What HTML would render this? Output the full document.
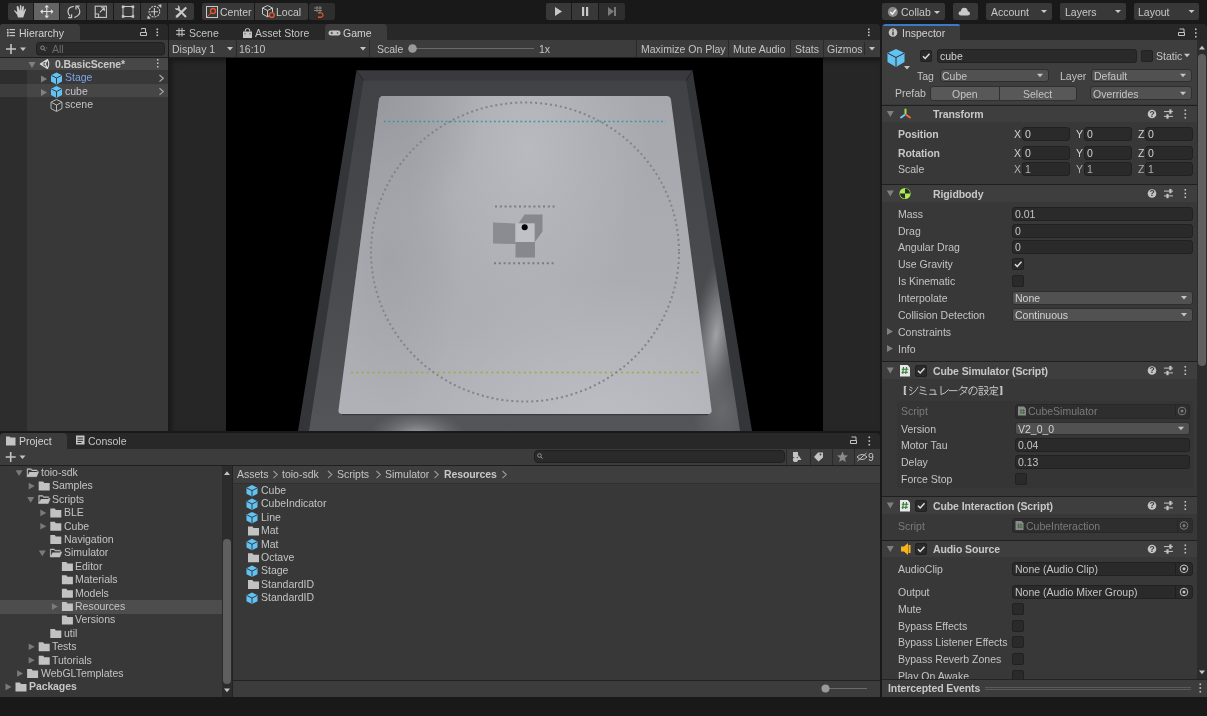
<!DOCTYPE html>
<html><head><meta charset="utf-8">
<style>
*{margin:0;padding:0;box-sizing:border-box}
html,body{width:1207px;height:716px;overflow:hidden;background:#191919}
body{-webkit-font-smoothing:antialiased;position:relative;font-family:"Liberation Sans",sans-serif;font-size:10.5px;color:#c4c4c4}
.a{position:absolute}
.t{position:absolute;white-space:nowrap;line-height:12px;will-change:transform}
.tb{background:#3c3c3c}
.fld{position:absolute;background:#2a2a2a;border:1px solid #212121;border-radius:2px}
.pop{position:absolute;background:#515151;border:1px solid #303030;border-radius:2px}
.btn{position:absolute;background:#585858;border:1px solid #303030;border-radius:2px}
.chk{position:absolute;width:12px;height:12px;background:#2a2a2a;border:1px solid #212121;border-radius:2px}
.arr{position:absolute;width:0;height:0;border-left:4px solid transparent;border-right:4px solid transparent;border-top:5px solid #c4c4c4}
</style></head>
<body>
<!-- ===== top toolbar ===== -->
<div id="toolbar" class="a" style="left:0;top:0;width:1207px;height:24px;background:#191919">
  <div class="a" style="left:8px;top:3px;width:25px;height:17px;background:#383838;border-radius:2px 0 0 2px"></div>
  <div class="a" style="left:34px;top:3px;width:25px;height:17px;background:#646464"></div>
  <div class="a" style="left:60px;top:3px;width:26px;height:17px;background:#383838"></div>
  <div class="a" style="left:87px;top:3px;width:26px;height:17px;background:#383838"></div>
  <div class="a" style="left:114px;top:3px;width:26px;height:17px;background:#383838"></div>
  <div class="a" style="left:141px;top:3px;width:26px;height:17px;background:#383838"></div>
  <div class="a" style="left:168px;top:3px;width:26px;height:17px;background:#383838;border-radius:0 2px 2px 0"></div>
  <svg class="a" style="left:0;top:0" width="200" height="24" fill="none" stroke="#c8c8c8" stroke-width="1.1">
    <!-- hand -->
    <path d="M18 17.6 L17 14.5 L14.2 11 Q13.8 10 14.8 10.2 L17.2 12.3 L16.6 6.6 Q17.6 5.4 18.5 6.6 L19.6 11 L20 5.4 Q20.6 4.6 21.3 5.4 L21.6 11 L22.3 6.4 Q23.3 5.6 24 6.6 L23.6 11.6 L25 9 Q25.8 8.4 26 9.4 L24.2 14.6 L23.2 17.6 Z" fill="#c8c8c8" stroke="none"/>
    <!-- move -->
    <path d="M41 11.5 H52.5 M46.8 5.8 V17.3" stroke="#e0e0e0"/>
    <path d="M42.6 9.8 L41 11.5 L42.6 13.3 M51 9.8 L52.6 11.5 L51 13.3 M45.2 7.4 L46.8 5.8 L48.4 7.4 M45.2 15.6 L46.8 17.3 L48.4 15.6" stroke="#e0e0e0" stroke-width="1.2"/>
    <!-- rotate -->
    <path d="M73.8 6.3 Q68 7 68 11.5 Q68 14 70.2 16.3" stroke-width="1.2"/>
    <path d="M68.2 17.6 H71.6 V14.2" stroke-width="1.2"/>
    <path d="M74.3 17.5 Q79.8 15.5 79.8 11.5 Q79.8 8.5 77.2 6.8" stroke-width="1.2"/>
    <path d="M79.6 6.2 H76 V9.6" stroke-width="1.2"/>
    <!-- scale -->
    <rect x="95.2" y="6.2" width="11.2" height="11.2" stroke-width="1.1"/><path d="M95.2 14 H98.6 V17.4 M99.8 12.4 L104 8.2 M101 7.8 H104.3 V11.1" stroke-width="1.1"/>
    <!-- rect -->
    <path d="M123 7 V16.5 M133 7 V16.5 M123.5 6.5 H132.5 M123.5 16.5 H132.5" stroke-width="1"/>
    <rect x="121.8" y="5.5" width="2.6" height="2.6" fill="#c8c8c8" stroke="none"/><rect x="131.6" y="5.5" width="2.6" height="2.6" fill="#c8c8c8" stroke="none"/>
    <rect x="121.8" y="15.2" width="2.6" height="2.6" fill="#c8c8c8" stroke="none"/><rect x="131.6" y="15.2" width="2.6" height="2.6" fill="#c8c8c8" stroke="none"/>
    <!-- transform -->
    <circle cx="154.4" cy="11.7" r="5.3" stroke-dasharray="2 1"/><path d="M154.4 8 V15.4 M150.7 11.7 H158.1" />
    <path d="M158.5 5.2 L161.2 4.8 L160.8 7.5 Z M150.3 18.2 L147.6 18.6 L148 15.9 Z" fill="#c8c8c8" stroke="#c8c8c8" stroke-width="0.6"/>
    <!-- custom -->
    <path d="M178.6 9.4 L186 17" stroke-width="2"/>
    <path d="M175 7.8 Q175.3 10.6 178 10.3 Q180.2 10 179.8 7.6 Q179.5 5.6 177.6 5.3 L178.4 7.6 L177 8.6 Z" fill="#c8c8c8" stroke="none"/>
    <path d="M185.5 6.8 L187 8.3 L177.8 17.4 L175.6 17.8 L176 15.6 Z" fill="#c8c8c8" stroke="none"/>
  </svg>
  <div class="a" style="left:202px;top:3px;width:52px;height:17px;background:#383838;border-radius:2px 0 0 2px"></div>
  <div class="a" style="left:255px;top:3px;width:53px;height:17px;background:#383838;border-radius:0 2px 2px 0"></div>
  <div class="a" style="left:309px;top:3px;width:26px;height:17px;background:#2e2e2e;border-radius:2px"></div>
  <svg class="a" style="left:200px;top:0" width="140" height="24" fill="none" stroke="#c8c8c8" stroke-width="1">
    <rect x="6.5" y="6.5" width="11" height="11"/>
    <circle cx="13" cy="11" r="2.5" stroke="#e2572c" stroke-width="1.3"/><path d="M7 17 L11 13" stroke="#e2572c"/>
    <path d="M62.5 8 L67.5 5.5 L72.5 8 V14 L67.5 16.8 L62.5 14 Z M62.5 8 L67.5 10.5 L72.5 8 M67.5 10.5 V16.8"/>
    <circle cx="71.8" cy="15" r="2.4" fill="#383838" stroke="#e2572c" stroke-width="1.4"/>
    <path d="M117 6 V12 M120 6 V12 M114 8 H122 M114 10.5 H122" stroke="#8a8a8a" stroke-width="0.9"/>
    <path d="M118 13 Q123 12 123 15 Q123 18 118 17" stroke="#e2572c" stroke-width="1.3"/>
  </svg>
  <div class="t" style="left:220px;top:6px;color:#c8c8c8">Center</div>
  <div class="t" style="left:276px;top:6px;color:#c8c8c8">Local</div>

  <div class="a" style="left:546px;top:3px;width:25px;height:17px;background:#383838;border-radius:2px 0 0 2px"></div>
  <div class="a" style="left:572px;top:3px;width:26px;height:17px;background:#383838"></div>
  <div class="a" style="left:599px;top:3px;width:26px;height:17px;background:#2e2e2e;border-radius:0 2px 2px 0"></div>
  <svg class="a" style="left:540px;top:0" width="90" height="24">
    <path d="M15 7 L22 11.5 L15 16 Z" fill="#c8c8c8"/>
    <rect x="42" y="7" width="2.2" height="9" fill="#c8c8c8"/><rect x="46" y="7" width="2.2" height="9" fill="#c8c8c8"/>
    <path d="M68 7 L74 11.5 L68 16 Z" fill="#7a7a7a"/><rect x="74" y="7" width="2" height="9" fill="#7a7a7a"/>
  </svg>

  <div class="a" style="left:882px;top:3px;width:63px;height:17px;background:#383838;border-radius:2px"></div>
  <div class="a" style="left:953px;top:3px;width:25px;height:17px;background:#383838;border-radius:2px"></div>
  <div class="a" style="left:986px;top:3px;width:66px;height:17px;background:#383838;border-radius:2px"></div>
  <div class="a" style="left:1060px;top:3px;width:66px;height:17px;background:#383838;border-radius:2px"></div>
  <div class="a" style="left:1134px;top:3px;width:65px;height:17px;background:#383838;border-radius:2px"></div>
  <svg class="a" style="left:880px;top:0" width="327" height="24">
    <circle cx="12.8" cy="12" r="5" fill="#8c8c8c"/><path d="M10.2 12 L12.3 14.2 L15.8 9.8" stroke="#f0f0f0" stroke-width="1.5" fill="none"/>
    <path d="M54 13 L60 13 L57 16 Z" fill="#c8c8c8" transform="translate(0,-2)"/>
    <path d="M81 15.5 Q78.5 15.5 78.5 13.3 Q78.5 11.3 80.8 11.2 Q81.3 7.8 84.3 7.8 Q87.3 7.8 87.8 11.2 Q90 11.4 90 13.4 Q90 15.5 87.5 15.5 Z" fill="#c8c8c8"/>
    <path d="M161 10 L167 10 L164 13 Z" fill="#c8c8c8"/>
    <path d="M235 10 L241 10 L238 13 Z" fill="#c8c8c8"/>
    <path d="M308.5 10 L314.5 10 L311.5 13 Z" fill="#c8c8c8"/>
  </svg>
  <div class="t" style="left:901px;top:6px;color:#c8c8c8">Collab</div>
  <div class="t" style="left:991px;top:6px;color:#c8c8c8">Account</div>
  <div class="t" style="left:1065px;top:6px;color:#c8c8c8">Layers</div>
  <div class="t" style="left:1138px;top:6px;color:#c8c8c8">Layout</div>
</div>

<!-- ===== Hierarchy ===== -->
<div id="hier" class="a" style="left:0;top:24px;width:168px;height:407px;background:#282828;border-radius:2px 4px 0 0;overflow:hidden">
  <div class="a" style="left:0;top:0;width:80px;height:16px;background:#3c3c3c;border-radius:2px 4px 0 0"></div>
  <div class="a tb" style="left:0;top:16px;width:168px;height:18px;border-bottom:1px solid #1f1f1f"></div>
  <div class="a" style="left:0;top:34px;width:168px;height:373px;background:#383838"></div>
  <div class="a" style="left:0;top:46px;width:27px;height:361px;background:#2d2d2d"></div>
  <div class="a" style="left:0;top:34px;width:168px;height:12px;background:#474747"></div>
  <div class="a" style="left:0;top:60px;width:27px;height:13px;background:#3d3d3d"></div>
  <div class="a" style="left:27px;top:60px;width:141px;height:13px;background:#464646"></div>
  <svg class="a" style="left:0;top:0" width="168" height="100">
    <g fill="#c4c4c4"><rect x="7" y="5" width="1.5" height="1.5"/><rect x="7.5" y="6.5" width="0.8" height="5.5"/><rect x="7" y="8" width="1.5" height="1.5"/><rect x="7" y="11" width="1.5" height="1.5"/>
    <rect x="9.5" y="5" width="5.5" height="1.2"/><rect x="9.5" y="8" width="5.5" height="1.2"/><rect x="9.5" y="11" width="5.5" height="1.2"/></g>
    <path d="M141.5 5.5 V4.5 H145.5 V8 M140.5 8.5 H146.5 V11.5 H140.5 Z" fill="none" stroke="#c4c4c4" stroke-width="1"/>
    <g fill="#c4c4c4"><rect x="156.5" y="4.5" width="1.6" height="1.6"/><rect x="156.5" y="7.5" width="1.6" height="1.6"/><rect x="156.5" y="10.5" width="1.6" height="1.6"/></g>
    <path d="M11 20 V30 M6 25 H16" stroke="#c4c4c4" stroke-width="1.6"/>
    <path d="M20 23.5 H26 L23 27 Z" fill="#c4c4c4"/>
    <rect x="36.5" y="18.5" width="128" height="12.5" rx="3" fill="#2a2a2a" stroke="#202020"/>
    <circle cx="42.5" cy="23.8" r="1.8" fill="none" stroke="#9a9a9a" stroke-width="0.9"/><path d="M43.8 25.2 L45.5 27" stroke="#9a9a9a" stroke-width="1"/><rect x="46.2" y="23.5" width="0.9" height="0.9" fill="#9a9a9a"/>
    <path d="M28.5 38 H35.5 L32 44 Z" fill="#808080"/>
    <path d="M41 51.5 L47 55 L41 58.5 Z" fill="#808080"/>
    <path d="M41 65 L47 68.5 L41 72 Z" fill="#808080"/>
    <g fill="none" stroke="#dcdcdc" stroke-width="1.1" stroke-linejoin="round">
      <path d="M40.3 40 L47.5 35.5 Q50 40 47.5 44.5 Z M40.5 40 H45.3 L47.4 35.8 M45.3 40 L47.4 44.2"/>
    </g>
    <g stroke="#a8a8a8" stroke-width="1.2" fill="none"><path d="M159.5 51 L163.3 54.3 L159.5 57.6 M159.5 64.3 L163.3 67.6 L159.5 70.9"/></g>
    <path d="M157 35 h1.5 v1.5 h-1.5z M157 38.5 h1.5 v1.5 h-1.5z M157 42 h1.5 v1.5 h-1.5z" fill="#c4c4c4"/>
  </svg>
  <div class="t" style="left:19px;top:3px;color:#d2d2d2">Hierarchy</div>
  <div class="t" style="left:52px;top:19px;color:#6c6c6c">All</div>
  <div class="t" style="left:55px;top:33.5px;color:#d2d2d2;font-weight:bold;letter-spacing:-0.15px;opacity:0.93">0.BasicScene*</div>
  <div class="t" style="left:65px;top:47px;color:#7ca5ea">Stage</div>
  <div class="t" style="left:65px;top:60.5px;color:#c4c4c4">cube</div>
  <div class="t" style="left:65px;top:74px;color:#c4c4c4">scene</div>
  <svg class="a" style="left:0;top:0" width="168" height="100">
    <g id="cubeic">
      <path d="M56.5 48.5 L62 51.2 V57.5 L56.5 60.5 L51 57.5 V51.2 Z" fill="#62c3f2"/>
      <path d="M51.5 51.5 L56.5 54 L61.5 51.5 M56.5 54 V60" stroke="#2d2d2d" stroke-width="0.9" fill="none"/>
    </g>
    <use href="#cubeic" y="13.5"/>
    <path d="M56.5 75.5 L62 78.2 V84.5 L56.5 87.5 L51 84.5 V78.2 Z M51.5 78.5 L56.5 81 L61.5 78.5 M56.5 81 V87" stroke="#c4c4c4" stroke-width="0.9" fill="none"/>
  </svg>
</div>

<!-- ===== Game ===== -->
<div id="game" class="a" style="left:169px;top:24px;width:711px;height:407px;background:#282828;border-radius:0 4px 0 0">
  <div class="a" style="left:156px;top:0;width:62px;height:16px;background:#3c3c3c;border-radius:4px 4px 0 0"></div>
  <div class="a tb" style="left:0;top:16px;width:711px;height:18px;border-bottom:1px solid #1f1f1f"></div>
  <div class="a" style="left:67px;top:16px;width:1px;height:17px;background:#2a2a2a"></div>
  <div class="a" style="left:200px;top:16px;width:1px;height:17px;background:#2a2a2a"></div>
  <div class="a" style="left:467px;top:16px;width:1px;height:17px;background:#2a2a2a"></div>
  <div class="a" style="left:559px;top:16px;width:1px;height:17px;background:#2a2a2a"></div>
  <div class="a" style="left:621px;top:16px;width:1px;height:17px;background:#2a2a2a"></div>
  <div class="a" style="left:654px;top:16px;width:1px;height:17px;background:#2a2a2a"></div>
  <div class="a" style="left:695px;top:18px;width:1px;height:13px;background:#2a2a2a"></div>
  <svg class="a" style="left:0;top:0" width="711" height="33">
    <path d="M10 4 V12.5 M13 4 V12.5 M7 6.6 H16 M7 10.3 H16" stroke="#c4c4c4" stroke-width="1" fill="none"/>
    <path d="M74 7.5 H83 V14 H74 Z" fill="#c4c4c4"/><path d="M76.3 7.5 V6 Q76.3 4.6 78.5 4.6 Q80.7 4.6 80.7 6 V7.5" stroke="#c4c4c4" stroke-width="1" fill="none"/><path d="M76 9 v1.5 M81 9 v1.5" stroke="#3c3c3c" stroke-width="0.8"/>
    <path d="M162 6.5 H169 Q171.5 6.5 171.5 9 Q171.5 11.5 169 11.5 H162 Q159.5 11.5 159.5 9 Q159.5 6.5 162 6.5 Z" fill="#c4c4c4"/>
    <path d="M161.5 9 H164 M162.8 7.8 V10.2" stroke="#3c3c3c" stroke-width="0.8"/><circle cx="168.5" cy="9" r="0.8" fill="#3c3c3c"/>
    <g fill="#c4c4c4"><rect x="699" y="4.5" width="1.6" height="1.6"/><rect x="699" y="7.5" width="1.6" height="1.6"/><rect x="699" y="10.5" width="1.6" height="1.6"/></g>
    <path d="M58 23 H64 L61 26.5 Z" fill="#c4c4c4"/>
    <path d="M191 23 H197 L194 26.5 Z" fill="#c4c4c4"/>
    <path d="M700 23 H706 L703 26.5 Z" fill="#c4c4c4"/>
    <line x1="243" y1="24.5" x2="365" y2="24.5" stroke="#6a6a6a" stroke-width="1"/>
    <circle cx="243.5" cy="24.5" r="4.3" fill="#9a9a9a"/>
  </svg>
  <div class="t" style="left:20px;top:3px;color:#c4c4c4">Scene</div>
  <div class="t" style="left:86px;top:3px;color:#c4c4c4">Asset Store</div>
  <div class="t" style="left:174px;top:3px;color:#d2d2d2">Game</div>
  <div class="t" style="left:3px;top:19px;color:#c4c4c4">Display 1</div>
  <div class="t" style="left:70px;top:19px;color:#c4c4c4">16:10</div>
  <div class="t" style="left:208px;top:19px;color:#c4c4c4">Scale</div>
  <div class="t" style="left:370px;top:19px;color:#c4c4c4">1x</div>
  <div class="t" style="left:472px;top:19px;color:#c4c4c4">Maximize On Play</div>
  <div class="t" style="left:564px;top:19px;color:#c4c4c4">Mute Audio</div>
  <div class="t" style="left:626px;top:19px;color:#c4c4c4">Stats</div>
  <div class="t" style="left:658px;top:19px;color:#c4c4c4">Gizmos</div>
  <div class="a" style="left:0;top:34px;width:711px;height:373px;background:#262626;box-shadow:inset 3px 3px 4px rgba(0,0,0,0.35)"></div>
  <div class="a" style="left:57px;top:34px;width:597px;height:373px;background:#000"></div>
  <svg class="a" style="left:57px;top:33px" width="597" height="374" viewBox="226 57 597 374">
    <defs>
      <linearGradient id="matbase" x1="0" y1="96" x2="0" y2="414" gradientUnits="userSpaceOnUse">
        <stop offset="0" stop-color="#a6a8ae"/><stop offset="0.5" stop-color="#aaacb1"/><stop offset="1" stop-color="#afb1b6"/>
      </linearGradient>
      <radialGradient id="mh1" cx="0" cy="0" r="1" gradientUnits="userSpaceOnUse" gradientTransform="translate(528 150) scale(120 190)">
        <stop offset="0" stop-color="#b8babf" stop-opacity="1"/><stop offset="1" stop-color="#b8babf" stop-opacity="0"/>
      </radialGradient>
      <radialGradient id="mh2" cx="0" cy="0" r="1" gradientUnits="userSpaceOnUse" gradientTransform="translate(600 430) scale(190 150)">
        <stop offset="0" stop-color="#bcbec3" stop-opacity="1"/><stop offset="1" stop-color="#bcbec3" stop-opacity="0"/>
      </radialGradient>
      <radialGradient id="mh3" cx="0" cy="0" r="1" gradientUnits="userSpaceOnUse" gradientTransform="translate(375 100) scale(110 130)">
        <stop offset="0" stop-color="#94969c" stop-opacity="0.85"/><stop offset="1" stop-color="#94969c" stop-opacity="0"/>
      </radialGradient>
      <radialGradient id="hlR" cx="0" cy="0" r="1" gradientUnits="userSpaceOnUse" gradientTransform="translate(716 335) rotate(8.5) scale(24 85)">
        <stop offset="0" stop-color="#a0a2a6"/><stop offset="0.45" stop-color="#85878b" stop-opacity="0.7"/><stop offset="1" stop-color="#707276" stop-opacity="0"/>
      </radialGradient>
      <radialGradient id="hlB" cx="0" cy="0" r="1" gradientUnits="userSpaceOnUse" gradientTransform="translate(417 436) scale(48 26)">
        <stop offset="0" stop-color="#a4a6aa"/><stop offset="0.45" stop-color="#808286" stop-opacity="0.7"/><stop offset="1" stop-color="#707276" stop-opacity="0"/>
      </radialGradient>
      <radialGradient id="hlBR" cx="0" cy="0" r="1" gradientUnits="userSpaceOnUse" gradientTransform="translate(722 410) scale(30 50)">
        <stop offset="0" stop-color="#67696d"/><stop offset="1" stop-color="#67696d" stop-opacity="0"/>
      </radialGradient>
      <radialGradient id="mdL" cx="0" cy="0" r="1" gradientUnits="userSpaceOnUse" gradientTransform="translate(390 260) scale(70 150)">
        <stop offset="0" stop-color="#9fa1a7" stop-opacity="0.8"/><stop offset="1" stop-color="#9fa1a7" stop-opacity="0"/>
      </radialGradient>
      <linearGradient id="bandg" x1="0" y1="80" x2="0" y2="431" gradientUnits="userSpaceOnUse">
        <stop offset="0" stop-color="#414246"/><stop offset="0.6" stop-color="#4a4b4f"/><stop offset="1" stop-color="#545559"/>
      </linearGradient>
    </defs>
    <polygon points="356.5,70.5 692.5,70.5 752,431 298,431" fill="#333538"/>
    <polygon points="356.5,70.5 692.5,70.5 686,80.5 363.5,80.5" fill="#3a3a3e"/>
    <polygon points="363.5,80.5 686,80.5 740,431 309,431" fill="url(#bandg)"/>
    <polygon points="363.5,80.5 686,80.5 740,431 309,431" fill="url(#hlR)"/>
    <polygon points="363.5,80.5 686,80.5 740,431 309,431" fill="url(#hlB)"/>
    <polygon points="363.5,80.5 686,80.5 740,431 309,431" fill="url(#hlBR)"/>
    <path d="M356.5 70.5 L363.5 80.5 M692.5 70.5 L686 80.5" stroke="#1e1f21" stroke-width="0.8"/>
    <path d="M342 414.5 H708" stroke="#3a3b3f" stroke-width="1.5"/>
    <path id="matp" d="M383.5 96 H666.5 Q670.5 96 671 100 L711.5 410 Q712 414 708 414 H342 Q338 414 338.5 410 L379 100 Q379.5 96 383.5 96 Z" fill="url(#matbase)"/>
    <path d="M383.5 96 H666.5 Q670.5 96 671 100 L711.5 410 Q712 414 708 414 H342 Q338 414 338.5 410 L379 100 Q379.5 96 383.5 96 Z" fill="url(#mh1)"/>
    <path d="M383.5 96 H666.5 Q670.5 96 671 100 L711.5 410 Q712 414 708 414 H342 Q338 414 338.5 410 L379 100 Q379.5 96 383.5 96 Z" fill="url(#mh2)"/>
    <path d="M383.5 96 H666.5 Q670.5 96 671 100 L711.5 410 Q712 414 708 414 H342 Q338 414 338.5 410 L379 100 Q379.5 96 383.5 96 Z" fill="url(#mh3)"/>
    <path d="M383.5 96 H666.5 Q670.5 96 671 100 L711.5 410 Q712 414 708 414 H342 Q338 414 338.5 410 L379 100 Q379.5 96 383.5 96 Z" fill="url(#mdL)"/>
    <line x1="384" y1="121.5" x2="666" y2="121.5" stroke="#3596ac" stroke-width="1.7" stroke-dasharray="1.8 2.6"/>
    <line x1="351" y1="372.5" x2="700" y2="372.5" stroke="#97b030" stroke-width="1.7" stroke-dasharray="2 3.4"/>
    <ellipse cx="525" cy="252" rx="154" ry="149.5" fill="none" stroke="#818388" stroke-width="2" stroke-dasharray="2 3"/>
    <line x1="495" y1="206.5" x2="555" y2="206.5" stroke="#7a7c81" stroke-width="2" stroke-dasharray="2 2.8"/>
    <line x1="494" y1="263.2" x2="556" y2="263.2" stroke="#7a7c81" stroke-width="2" stroke-dasharray="2 2.8"/>
    <polygon points="493,222.5 515.5,223.5 515.5,244 493,243.5" fill="#8a8c92"/>
    <polygon points="515.5,242 535,242 535,257.5 515.5,257.5" fill="#86888e"/>
    <polygon points="518.5,223.5 524.5,214.5 542.5,214.5 542.5,231.5 534.5,242.5 534.5,223.5" fill="#86888e"/>
    <rect x="515.5" y="223.5" width="19" height="18.5" fill="#bfc1c7"/>
    <circle cx="524.7" cy="227.3" r="3" fill="#000"/>
  </svg>
</div>

<!-- ===== Inspector ===== -->
<div id="insp" class="a" style="left:882px;top:24px;width:325px;height:673px;background:#282828;border-radius:4px 4px 0 0;overflow:hidden">
<div class="a" style="left:0.0px;top:0.0px;width:78.0px;height:16.0px;background:#3c3c3c;border-radius:4px 4px 0 0"></div>
<div class="a" style="left:0.0px;top:0.0px;width:78.0px;height:2.0px;background:#3a7ac6;border-radius:3px 3px 0 0"></div>
<div class="t" style="left:20.0px;top:2.5px;color:#d2d2d2;">Inspector</div>
<div class="a" style="left:0.0px;top:16.0px;width:315.0px;height:657.0px;background:#383838"></div>
<div class="a" style="left:315.0px;top:16.0px;width:10.0px;height:640.0px;background:#2c2c2c"></div>
<div class="a" style="left:316.0px;top:30.0px;width:8.0px;height:312.0px;background:#5f5f5f;border-radius:4px"></div>
<div class="a" style="left:0.0px;top:16.0px;width:315.0px;height:64.0px;background:#3e3e3e"></div>
<div class="a" style="left:38.0px;top:26.0px;width:12.0px;height:12.0px;background:#2a2a2a;border:1px solid #212121;border-radius:2px"></div>
<div class="a" style="left:55.0px;top:24.5px;width:200.0px;height:14.0px;background:#2a2a2a;border:1px solid #212121;border-radius:3px"></div>
<div class="t" style="left:58.0px;top:25.5px;color:#d2d2d2;">cube</div>
<div class="a" style="left:258.5px;top:25.5px;width:12.0px;height:12.0px;background:#2a2a2a;border:1px solid #212121;border-radius:2px"></div>
<div class="t" style="left:273.5px;top:25.5px;color:#c4c4c4;">Static</div>
<div class="t" style="left:35.0px;top:45.5px;color:#c4c4c4;">Tag</div>
<div class="a" style="left:57.5px;top:44.8px;width:109.5px;height:13.5px;background:#515151;border:1px solid #2e2e2e;border-radius:3px"></div>
<div class="t" style="left:60.0px;top:45.5px;color:#c4c4c4;">Cube</div>
<div class="t" style="left:178.0px;top:45.5px;color:#c4c4c4;">Layer</div>
<div class="a" style="left:209.0px;top:44.8px;width:101.0px;height:13.5px;background:#515151;border:1px solid #2e2e2e;border-radius:3px"></div>
<div class="t" style="left:212.0px;top:45.5px;color:#c4c4c4;">Default</div>
<div class="t" style="left:13.0px;top:63.0px;color:#c4c4c4;">Prefab</div>
<div class="a" style="left:47.5px;top:62.4px;width:70.0px;height:14.2px;background:#585858;border:1px solid #303030;border-radius:3px 0 0 3px"></div>
<div class="a" style="left:117.0px;top:62.4px;width:78.0px;height:14.2px;background:#585858;border:1px solid #303030;border-radius:0 3px 3px 0"></div>
<div class="t" style="left:69.5px;top:63.5px;color:#c4c4c4;">Open</div>
<div class="t" style="left:140.5px;top:63.5px;color:#c4c4c4;">Select</div>
<div class="a" style="left:207.5px;top:62.4px;width:102.5px;height:14.1px;background:#515151;border:1px solid #2e2e2e;border-radius:3px"></div>
<div class="t" style="left:210.5px;top:63.5px;color:#c4c4c4;">Overrides</div>
<div class="a" style="left:0.0px;top:81.0px;width:315.0px;height:1.0px;background:#1f1f1f"></div>
<div class="a" style="left:0.0px;top:82.0px;width:315.0px;height:16.0px;background:#3e3e3e"></div>
<div class="t" style="left:50.5px;top:84.0px;color:#d2d2d2;font-weight:bold;letter-spacing:-0.1px;opacity:0.93;">Transform</div>
<div class="t" style="left:15.6px;top:104.0px;color:#d2d2d2;font-weight:bold;letter-spacing:-0.1px;opacity:0.93;">Position</div>
<div class="t" style="left:132.0px;top:104.0px;color:#d2d2d2;">X</div>
<div class="a" style="left:140.0px;top:103.0px;width:48.0px;height:14.0px;background:#2a2a2a;border:1px solid #212121;border-radius:3px"></div>
<div class="t" style="left:143.0px;top:104.0px;color:#d2d2d2;">0</div>
<div class="t" style="left:194.0px;top:104.0px;color:#d2d2d2;">Y</div>
<div class="a" style="left:202.0px;top:103.0px;width:47.5px;height:14.0px;background:#2a2a2a;border:1px solid #212121;border-radius:3px"></div>
<div class="t" style="left:205.0px;top:104.0px;color:#d2d2d2;">0</div>
<div class="t" style="left:256.0px;top:104.0px;color:#d2d2d2;">Z</div>
<div class="a" style="left:263.0px;top:103.0px;width:48.0px;height:14.0px;background:#2a2a2a;border:1px solid #212121;border-radius:3px"></div>
<div class="t" style="left:266.0px;top:104.0px;color:#d2d2d2;">0</div>
<div class="t" style="left:15.6px;top:122.5px;color:#d2d2d2;font-weight:bold;letter-spacing:-0.1px;opacity:0.93;">Rotation</div>
<div class="t" style="left:132.0px;top:122.5px;color:#d2d2d2;">X</div>
<div class="a" style="left:140.0px;top:121.5px;width:48.0px;height:14.0px;background:#2a2a2a;border:1px solid #212121;border-radius:3px"></div>
<div class="t" style="left:143.0px;top:122.5px;color:#d2d2d2;">0</div>
<div class="t" style="left:194.0px;top:122.5px;color:#d2d2d2;">Y</div>
<div class="a" style="left:202.0px;top:121.5px;width:47.5px;height:14.0px;background:#2a2a2a;border:1px solid #212121;border-radius:3px"></div>
<div class="t" style="left:205.0px;top:122.5px;color:#d2d2d2;">0</div>
<div class="t" style="left:256.0px;top:122.5px;color:#d2d2d2;">Z</div>
<div class="a" style="left:263.0px;top:121.5px;width:48.0px;height:14.0px;background:#2a2a2a;border:1px solid #212121;border-radius:3px"></div>
<div class="t" style="left:266.0px;top:122.5px;color:#d2d2d2;">0</div>
<div class="t" style="left:15.6px;top:139.3px;color:#c4c4c4;">Scale</div>
<div class="t" style="left:132.0px;top:139.3px;color:#b0b0b0;">X</div>
<div class="a" style="left:140.0px;top:138.3px;width:48.0px;height:14.0px;background:#2a2a2a;border:1px solid #212121;border-radius:3px"></div>
<div class="t" style="left:143.0px;top:139.3px;color:#b0b0b0;">1</div>
<div class="t" style="left:194.0px;top:139.3px;color:#b0b0b0;">Y</div>
<div class="a" style="left:202.0px;top:138.3px;width:47.5px;height:14.0px;background:#2a2a2a;border:1px solid #212121;border-radius:3px"></div>
<div class="t" style="left:205.0px;top:139.3px;color:#b0b0b0;">1</div>
<div class="t" style="left:256.0px;top:139.3px;color:#b0b0b0;">Z</div>
<div class="a" style="left:263.0px;top:138.3px;width:48.0px;height:14.0px;background:#2a2a2a;border:1px solid #212121;border-radius:3px"></div>
<div class="t" style="left:266.0px;top:139.3px;color:#b0b0b0;">1</div>
<div class="a" style="left:0.0px;top:160.0px;width:315.0px;height:1.0px;background:#1f1f1f"></div>
<div class="a" style="left:0.0px;top:161.0px;width:315.0px;height:17.0px;background:#3e3e3e"></div>
<div class="t" style="left:50.5px;top:163.5px;color:#d2d2d2;font-weight:bold;letter-spacing:-0.1px;opacity:0.93;">Rigidbody</div>
<div class="t" style="left:15.6px;top:183.5px;color:#c4c4c4;">Mass</div>
<div class="a" style="left:130.0px;top:182.5px;width:181.0px;height:14.0px;background:#2a2a2a;border:1px solid #212121;border-radius:3px"></div>
<div class="t" style="left:133.0px;top:183.5px;color:#c4c4c4;">0.01</div>
<div class="t" style="left:15.6px;top:200.5px;color:#c4c4c4;">Drag</div>
<div class="a" style="left:130.0px;top:199.5px;width:181.0px;height:14.0px;background:#2a2a2a;border:1px solid #212121;border-radius:3px"></div>
<div class="t" style="left:133.0px;top:200.5px;color:#c4c4c4;">0</div>
<div class="t" style="left:15.6px;top:217.0px;color:#c4c4c4;">Angular Drag</div>
<div class="a" style="left:130.0px;top:216.0px;width:181.0px;height:14.0px;background:#2a2a2a;border:1px solid #212121;border-radius:3px"></div>
<div class="t" style="left:133.0px;top:217.0px;color:#c4c4c4;">0</div>
<div class="t" style="left:15.6px;top:234.0px;color:#c4c4c4;">Use Gravity</div>
<div class="a" style="left:130.0px;top:234.0px;width:12.0px;height:12.0px;background:#2a2a2a;border:1px solid #212121;border-radius:2px"></div>
<div class="t" style="left:15.6px;top:251.0px;color:#c4c4c4;">Is Kinematic</div>
<div class="a" style="left:130.0px;top:251.0px;width:12.0px;height:12.0px;background:#2a2a2a;border:1px solid #212121;border-radius:2px"></div>
<div class="t" style="left:15.6px;top:267.8px;color:#c4c4c4;">Interpolate</div>
<div class="a" style="left:130.0px;top:267.0px;width:181.0px;height:13.6px;background:#515151;border:1px solid #2e2e2e;border-radius:3px"></div>
<div class="t" style="left:133.0px;top:267.8px;color:#d2d2d2;">None</div>
<div class="t" style="left:15.6px;top:284.8px;color:#c4c4c4;">Collision Detection</div>
<div class="a" style="left:130.0px;top:284.0px;width:181.0px;height:13.6px;background:#515151;border:1px solid #2e2e2e;border-radius:3px"></div>
<div class="t" style="left:133.0px;top:284.8px;color:#d2d2d2;">Continuous</div>
<div class="t" style="left:15.6px;top:301.5px;color:#c4c4c4;">Constraints</div>
<div class="t" style="left:15.6px;top:318.5px;color:#c4c4c4;">Info</div>
<div class="a" style="left:0.0px;top:337.0px;width:315.0px;height:1.0px;background:#1f1f1f"></div>
<div class="a" style="left:0.0px;top:338.0px;width:315.0px;height:17.0px;background:#3e3e3e"></div>
<div class="a" style="left:33.0px;top:340.5px;width:12.0px;height:12.0px;background:#2a2a2a;border:1px solid #212121;border-radius:2px"></div>
<div class="t" style="left:50.5px;top:340.5px;color:#d2d2d2;font-weight:bold;letter-spacing:-0.1px;opacity:0.93;">Cube Simulator (Script)</div>
<div class="a" style="left:15.0px;top:377.0px;width:296.0px;height:87.0px;background:#353535;border-radius:2px"></div>
<div class="t" style="left:18.5px;top:381.0px;color:#7b7b7b;">Script</div>
<div class="a" style="left:133.0px;top:379.5px;width:175.0px;height:15.0px;background:#2e2e2e;border:1px solid #282828;border-radius:3px"></div>
<div class="t" style="left:146.0px;top:381.3px;color:#7b7b7b;">CubeSimulator</div>
<div class="a" style="left:293.0px;top:380.0px;width:1.0px;height:13.0px;background:#262626"></div>
<div class="t" style="left:18.5px;top:398.5px;color:#c4c4c4;">Version</div>
<div class="a" style="left:133.0px;top:398.0px;width:175.0px;height:13.0px;background:#515151;border:1px solid #2e2e2e;border-radius:3px"></div>
<div class="t" style="left:136.0px;top:398.5px;color:#d2d2d2;">V2_0_0</div>
<div class="t" style="left:18.5px;top:415.0px;color:#c4c4c4;">Motor Tau</div>
<div class="a" style="left:133.0px;top:414.0px;width:175.0px;height:14.0px;background:#2a2a2a;border:1px solid #212121;border-radius:3px"></div>
<div class="t" style="left:136.0px;top:415.0px;color:#c4c4c4;">0.04</div>
<div class="t" style="left:18.5px;top:432.0px;color:#c4c4c4;">Delay</div>
<div class="a" style="left:133.0px;top:431.0px;width:175.0px;height:14.0px;background:#2a2a2a;border:1px solid #212121;border-radius:3px"></div>
<div class="t" style="left:136.0px;top:432.0px;color:#c4c4c4;">0.13</div>
<div class="t" style="left:18.5px;top:448.5px;color:#c4c4c4;">Force Stop</div>
<div class="a" style="left:133.0px;top:448.5px;width:12.0px;height:12.0px;background:#2a2a2a;border:1px solid #212121;border-radius:2px"></div>
<div class="a" style="left:0.0px;top:472.0px;width:315.0px;height:1.0px;background:#1f1f1f"></div>
<div class="a" style="left:0.0px;top:473.0px;width:315.0px;height:17.0px;background:#3e3e3e"></div>
<div class="a" style="left:33.0px;top:475.5px;width:12.0px;height:12.0px;background:#2a2a2a;border:1px solid #212121;border-radius:2px"></div>
<div class="t" style="left:50.5px;top:475.5px;color:#d2d2d2;font-weight:bold;letter-spacing:-0.1px;opacity:0.93;">Cube Interaction (Script)</div>
<div class="t" style="left:15.6px;top:495.5px;color:#7b7b7b;">Script</div>
<div class="a" style="left:130.0px;top:494.0px;width:181.0px;height:15.0px;background:#2e2e2e;border:1px solid #282828;border-radius:3px"></div>
<div class="t" style="left:143.5px;top:496.0px;color:#7b7b7b;">CubeInteraction</div>
<div class="a" style="left:295.0px;top:495.0px;width:1.0px;height:13.0px;background:#262626"></div>
<div class="a" style="left:0.0px;top:516.0px;width:315.0px;height:1.0px;background:#1f1f1f"></div>
<div class="a" style="left:0.0px;top:517.0px;width:315.0px;height:16.0px;background:#3e3e3e"></div>
<div class="a" style="left:33.0px;top:519.0px;width:12.0px;height:12.0px;background:#2a2a2a;border:1px solid #212121;border-radius:2px"></div>
<div class="t" style="left:50.5px;top:519.0px;color:#d2d2d2;font-weight:bold;letter-spacing:-0.1px;opacity:0.93;">Audio Source</div>
<div class="t" style="left:15.6px;top:538.8px;color:#c4c4c4;">AudioClip</div>
<div class="a" style="left:130.0px;top:537.8px;width:181.0px;height:14.0px;background:#2a2a2a;border:1px solid #212121;border-radius:3px"></div>
<div class="t" style="left:132.5px;top:538.8px;color:#c4c4c4;">None (Audio Clip)</div>
<div class="a" style="left:293.0px;top:538.8px;width:1.0px;height:12.0px;background:#1f1f1f"></div>
<div class="t" style="left:15.6px;top:562.0px;color:#c4c4c4;">Output</div>
<div class="a" style="left:130.0px;top:561.0px;width:181.0px;height:14.0px;background:#2a2a2a;border:1px solid #212121;border-radius:3px"></div>
<div class="t" style="left:132.5px;top:562.0px;color:#c4c4c4;">None (Audio Mixer Group)</div>
<div class="a" style="left:293.0px;top:562.0px;width:1.0px;height:12.0px;background:#1f1f1f"></div>
<div class="t" style="left:15.6px;top:579.0px;color:#c4c4c4;">Mute</div>
<div class="a" style="left:130.0px;top:579.0px;width:12.0px;height:12.0px;background:#2a2a2a;border:1px solid #212121;border-radius:2px"></div>
<div class="t" style="left:15.6px;top:595.8px;color:#c4c4c4;">Bypass Effects</div>
<div class="a" style="left:130.0px;top:595.8px;width:12.0px;height:12.0px;background:#2a2a2a;border:1px solid #212121;border-radius:2px"></div>
<div class="t" style="left:15.6px;top:612.3px;color:#c4c4c4;">Bypass Listener Effects</div>
<div class="a" style="left:130.0px;top:612.3px;width:12.0px;height:12.0px;background:#2a2a2a;border:1px solid #212121;border-radius:2px"></div>
<div class="t" style="left:15.6px;top:629.0px;color:#c4c4c4;">Bypass Reverb Zones</div>
<div class="a" style="left:130.0px;top:629.0px;width:12.0px;height:12.0px;background:#2a2a2a;border:1px solid #212121;border-radius:2px"></div>
<div class="t" style="left:15.6px;top:645.7px;color:#c4c4c4;">Play On Awake</div>
<div class="a" style="left:130.0px;top:645.7px;width:12.0px;height:12.0px;background:#2a2a2a;border:1px solid #212121;border-radius:2px"></div>
<div class="a" style="left:0.0px;top:655.0px;width:325.0px;height:18.0px;background:#3c3c3c;border-top:1px solid #232323"></div>
<div class="t" style="left:5.5px;top:658.3px;color:#d2d2d2;font-weight:bold;letter-spacing:-0.1px;opacity:0.93;">Intercepted Events</div>
<div class="a" style="left:103.0px;top:662.5px;width:206.0px;height:3.0px;border-top:1px solid #5a5a5a;border-bottom:1px solid #5a5a5a"></div>
<svg class="a" style="left:0;top:0" width="325" height="673"><circle cx="11" cy="8.5" r="4.3" fill="#c4c4c4"/><rect x="10.299999999999955" y="7.5" width="1.4" height="3.8" fill="#3c3c3c"/><rect x="10.299999999999955" y="5.300000000000001" width="1.4" height="1.3" fill="#3c3c3c"/><path d="M297.5 5 H302 V8.5 M296.5 8.5 H302.5 V11.5 H296.5 Z" fill="none" stroke="#c4c4c4" stroke-width="1"/><g fill="#c4c4c4"><rect x="313.0" y="4.5" width="1.6" height="1.6"/><rect x="313.0" y="8.2" width="1.6" height="1.6"/><rect x="313.0" y="11.9" width="1.6" height="1.6"/></g><path d="M317 25.5 h6 l-3 -3.8 z" fill="#c4c4c4"/><path d="M317 646.5 h6 l-3 3.8 z" fill="#c4c4c4"/><path d="M14 25 L22.5 29 V38 L14 43 L5.5 38 V29 Z" fill="#62c3f2"/><path d="M6 29.299999999999997 L14 33.5 L22 29.299999999999997 M14 33.5 V42.5" stroke="#2d2d2d" stroke-width="1" fill="none"/><path d="M22 42 h6 l-3 3.5 z" fill="#c4c4c4"/><path d="M41.0 32.2 l2.2 2.3 l4.3 -4.8" stroke="#e0e0e0" stroke-width="1.4" fill="none"/><path d="M302 29.799999999999997 h6 l-3 3.5 z" fill="#c4c4c4"/><path d="M155.0 49.8 h6 l-3 3.5 z" fill="#c4c4c4"/><path d="M298.0 49.8 h6 l-3 3.5 z" fill="#c4c4c4"/><path d="M298.0 67.7 h6 l-3 3.5 z" fill="#c4c4c4"/><path d="M4.8 87.0 h7 l-3.5 6 z" fill="#7f7f7f"/><path d="M23.5 89.5 V85.5" stroke="#a4e04a" stroke-width="2" stroke-linecap="round"/><path d="M22.5 91.0 L19 93.5" stroke="#6dc9f5" stroke-width="2" stroke-linecap="round"/><path d="M24.5 91.0 L28 93.5" stroke="#ef6a3a" stroke-width="2" stroke-linecap="round"/><circle cx="270" cy="90.0" r="4.3" fill="#c4c4c4"/><text x="270" y="92.8" font-size="8.5" font-weight="bold" text-anchor="middle" fill="#3e3e3e" font-family="Liberation Sans">?</text><path d="M282 87.6 h9 M282 92.4 h9" stroke="#c4c4c4" stroke-width="1" fill="none"/><rect x="287.29999999999995" y="85.4" width="2.2" height="4.4" fill="#c4c4c4"/><rect x="284.4000000000001" y="90.3" width="2.2" height="4.4" fill="#c4c4c4"/><g fill="#c4c4c4"><rect x="302.5" y="85.5" width="1.6" height="1.6"/><rect x="302.5" y="89.2" width="1.6" height="1.6"/><rect x="302.5" y="92.9" width="1.6" height="1.6"/></g><path d="M4.8 166.5 h7 l-3.5 6 z" fill="#7f7f7f"/><circle cx="23" cy="169.5" r="5.6" fill="#a8ec52"/><path d="M23 164.5 A5 5 0 0 1 28 169.5 H23 Z M23 174.5 A5 5 0 0 1 18 169.5 H23 Z" fill="#2a2a2a"/><circle cx="270" cy="169.5" r="4.3" fill="#c4c4c4"/><text x="270" y="172.3" font-size="8.5" font-weight="bold" text-anchor="middle" fill="#3e3e3e" font-family="Liberation Sans">?</text><path d="M282 167.1 h9 M282 171.9 h9" stroke="#c4c4c4" stroke-width="1" fill="none"/><rect x="287.29999999999995" y="164.9" width="2.2" height="4.4" fill="#c4c4c4"/><rect x="284.4000000000001" y="169.8" width="2.2" height="4.4" fill="#c4c4c4"/><g fill="#c4c4c4"><rect x="302.5" y="165.0" width="1.6" height="1.6"/><rect x="302.5" y="168.7" width="1.6" height="1.6"/><rect x="302.5" y="172.4" width="1.6" height="1.6"/></g><path d="M133.0 240.2 l2.2 2.3 l4.3 -4.8" stroke="#e0e0e0" stroke-width="1.4" fill="none"/><path d="M299.0 272.0 h6 l-3 3.5 z" fill="#c4c4c4"/><path d="M299.0 289.0 h6 l-3 3.5 z" fill="#c4c4c4"/><path d="M5 304.0 l6 3.5 l-6 3.5 z" fill="#7f7f7f"/><path d="M5 321.0 l6 3.5 l-6 3.5 z" fill="#7f7f7f"/><path d="M4.8 343.5 h7 l-3.5 6 z" fill="#7f7f7f"/><path d="M18 341.0 h7.5 l2.5 2.5 v9 h-10 z" fill="#e8e8e8"/><path d="M21.5 343.0 l-0.8 7 M24.5 343.0 l-0.8 7 M19.8 345.2 h6.5 M19.5 348.3 h6.5" stroke="#2e7d32" stroke-width="1.1"/><path d="M36.0 346.7 l2.2 2.3 l4.3 -4.8" stroke="#e0e0e0" stroke-width="1.4" fill="none"/><circle cx="270" cy="346.5" r="4.3" fill="#c4c4c4"/><text x="270" y="349.3" font-size="8.5" font-weight="bold" text-anchor="middle" fill="#3e3e3e" font-family="Liberation Sans">?</text><path d="M282 344.1 h9 M282 348.9 h9" stroke="#c4c4c4" stroke-width="1" fill="none"/><rect x="287.29999999999995" y="341.9" width="2.2" height="4.4" fill="#c4c4c4"/><rect x="284.4000000000001" y="346.8" width="2.2" height="4.4" fill="#c4c4c4"/><g fill="#c4c4c4"><rect x="302.5" y="342.0" width="1.6" height="1.6"/><rect x="302.5" y="345.7" width="1.6" height="1.6"/><rect x="302.5" y="349.4" width="1.6" height="1.6"/></g><path d="M136 382.5 h6 l2 2 v7 h-8 z" fill="#8a8a8a"/><path d="M139 385 v5 M141.5 385 v5 M138 386.5 h5 M138 388.7 h5" stroke="#3d6b3d" stroke-width="0.8"/><circle cx="300" cy="387" r="3.8" fill="none" stroke="#7b7b7b" stroke-width="1"/><circle cx="300" cy="387" r="1.5" fill="#7b7b7b"/><path d="M296.0 402.7 h6 l-3 3.5 z" fill="#c4c4c4"/><path d="M4.8 478.5 h7 l-3.5 6 z" fill="#7f7f7f"/><path d="M18 476.0 h7.5 l2.5 2.5 v9 h-10 z" fill="#e8e8e8"/><path d="M21.5 478.0 l-0.8 7 M24.5 478.0 l-0.8 7 M19.8 480.2 h6.5 M19.5 483.3 h6.5" stroke="#2e7d32" stroke-width="1.1"/><path d="M36.0 481.7 l2.2 2.3 l4.3 -4.8" stroke="#e0e0e0" stroke-width="1.4" fill="none"/><circle cx="270" cy="481.5" r="4.3" fill="#c4c4c4"/><text x="270" y="484.3" font-size="8.5" font-weight="bold" text-anchor="middle" fill="#3e3e3e" font-family="Liberation Sans">?</text><path d="M282 479.1 h9 M282 483.9 h9" stroke="#c4c4c4" stroke-width="1" fill="none"/><rect x="287.29999999999995" y="476.9" width="2.2" height="4.4" fill="#c4c4c4"/><rect x="284.4000000000001" y="481.8" width="2.2" height="4.4" fill="#c4c4c4"/><g fill="#c4c4c4"><rect x="302.5" y="477.0" width="1.6" height="1.6"/><rect x="302.5" y="480.7" width="1.6" height="1.6"/><rect x="302.5" y="484.4" width="1.6" height="1.6"/></g><path d="M133.5 497 h6 l2 2 v7 h-8 z" fill="#8a8a8a"/><path d="M136.5 499.5 v5 M139 499.5 v5 M135.5 501 h5 M135.5 503.20000000000005 h5" stroke="#3d6b3d" stroke-width="0.8"/><circle cx="302" cy="501.5" r="3.8" fill="none" stroke="#7b7b7b" stroke-width="1"/><circle cx="302" cy="501.5" r="1.5" fill="#7b7b7b"/><path d="M4.8 522.0 h7 l-3.5 6 z" fill="#7f7f7f"/><path d="M19 522.5 h3 l4 -3.5 v12 l-4 -3.5 h-3 z" fill="#f6b51e"/><rect x="26.5" y="521.0" width="2" height="8" fill="#f6b51e"/><path d="M36.0 525.2 l2.2 2.3 l4.3 -4.8" stroke="#e0e0e0" stroke-width="1.4" fill="none"/><circle cx="270" cy="525.0" r="4.3" fill="#c4c4c4"/><text x="270" y="527.8" font-size="8.5" font-weight="bold" text-anchor="middle" fill="#3e3e3e" font-family="Liberation Sans">?</text><path d="M282 522.6 h9 M282 527.4 h9" stroke="#c4c4c4" stroke-width="1" fill="none"/><rect x="287.29999999999995" y="520.4" width="2.2" height="4.4" fill="#c4c4c4"/><rect x="284.4000000000001" y="525.3" width="2.2" height="4.4" fill="#c4c4c4"/><g fill="#c4c4c4"><rect x="302.5" y="520.5" width="1.6" height="1.6"/><rect x="302.5" y="524.2" width="1.6" height="1.6"/><rect x="302.5" y="527.9" width="1.6" height="1.6"/></g><circle cx="302" cy="544.8" r="3.8" fill="none" stroke="#c4c4c4" stroke-width="1"/><circle cx="302" cy="544.8" r="1.5" fill="#c4c4c4"/><circle cx="302" cy="568.0" r="3.8" fill="none" stroke="#c4c4c4" stroke-width="1"/><circle cx="302" cy="568.0" r="1.5" fill="#c4c4c4"/><g fill="#c4c4c4"><rect x="317.5" y="659.5" width="1.6" height="1.6"/><rect x="317.5" y="663.2" width="1.6" height="1.6"/><rect x="317.5" y="666.9" width="1.6" height="1.6"/></g><g transform="translate(-882,-24)" fill="none" stroke="#c4c4c4" stroke-width="0.95" stroke-linecap="round"><path d="M903.8 386 h2.8 l-0.9 1.5 v6 l0.9 1.5 h-2.8 z" fill="#c4c4c4" stroke="none"/><path d="M910 387 L912.2 388.2 M909.5 389.6 L911.6 390.8 M910 394.8 Q915 393 918 387"/><path d="M920.3 386.8 L925 388 M920.5 389.8 L925.3 391 M919.8 393 L926.5 394.6"/><path d="M930.3 390 H935 V394.3 M929.6 394.3 H936.5"/><path d="M941 386.5 V394.6 Q945 393.8 948.6 389.6"/><path d="M949.3 390.6 H957"/><path d="M962.2 386 Q961.3 388.5 959.2 390.2 M961.5 387.6 H967.3 Q966 392.3 960.2 395 M962.2 390.2 L966 392.6"/><path d="M972.6 387.2 Q971.3 392 969.8 394.4 Q968.5 393.3 969 390.2 Q970.5 386.6 974 386.8 Q977.6 387.4 977.2 391 Q976.7 394.5 972.8 395"/><path d="M979 386.6 H982.6 M978.8 388.6 H983.2 M979.2 390.4 H982.6 M979.6 392.3 H982.3 V395 H979.6 Z M984.6 386.6 H987.3 V389 M984.2 390.3 H988.2 M984.6 390.8 Q986 393.6 988.2 395 M988 390.8 Q986.3 393.8 984 395"/><path d="M993.6 385.8 V387 M990 389 V387.6 H997.6 V389 M991 390.2 H996.6 M993.6 390.2 V394.6 M993.6 392.4 H996.4 M991.6 391.6 Q991.2 394 989.6 395 M991.8 394 Q994 395.3 998 395.1"/><path d="M999.6 386 h2.8 v9 h-2.8 l0.9 -1.5 v-6 z" fill="#c4c4c4" stroke="none"/></g></svg>
<!--JP-->
</div>

<!-- ===== Project ===== -->
<div id="proj" class="a" style="left:0;top:432px;width:880px;height:265px;overflow:hidden">
<div class="a" style="left:0.0px;top:1.0px;width:880.0px;height:264.0px;background:#282828;border-radius:4px 4px 0 0"></div>
<div class="a" style="left:0.0px;top:1.0px;width:67.0px;height:16.0px;background:#3c3c3c;border-radius:4px 4px 0 0"></div>
<div class="t" style="left:19.0px;top:3.1px;color:#d2d2d2;">Project</div>
<div class="t" style="left:88.0px;top:3.1px;color:#c4c4c4;">Console</div>
<div class="a" style="left:0.0px;top:17.0px;width:880.0px;height:17.0px;background:#3c3c3c;border-bottom:1px solid #1f1f1f"></div>
<div class="a" style="left:533.5px;top:18.3px;width:251.0px;height:13.0px;background:#2a2a2a;border:1px solid #1f1f1f;border-radius:4px"></div>
<div class="a" style="left:786.0px;top:17.0px;width:1.0px;height:16.0px;background:#2a2a2a"></div>
<div class="a" style="left:809.5px;top:17.0px;width:1.0px;height:16.0px;background:#2a2a2a"></div>
<div class="a" style="left:831.5px;top:17.0px;width:1.0px;height:16.0px;background:#2a2a2a"></div>
<div class="a" style="left:853.5px;top:17.0px;width:1.0px;height:16.0px;background:#2a2a2a"></div>
<div class="t" style="left:868.0px;top:18.6px;color:#c4c4c4;">9</div>
<div class="a" style="left:0.0px;top:34.0px;width:880.0px;height:231.0px;background:#383838"></div>
<div class="a" style="left:222.0px;top:34.0px;width:10.0px;height:231.0px;background:#2c2c2c"></div>
<div class="a" style="left:222.8px;top:106.5px;width:8.5px;height:145.5px;background:#5f5f5f;border-radius:4.5px"></div>
<div class="a" style="left:232.0px;top:34.0px;width:1.0px;height:231.0px;background:#232323"></div>
<div class="a" style="left:0.0px;top:168.0px;width:222.0px;height:13.8px;background:#4d4d4d"></div>
<div class="t" style="left:40.6px;top:34.0px;color:#c4c4c4;">toio-sdk</div>
<div class="t" style="left:52.2px;top:47.4px;color:#c4c4c4;">Samples</div>
<div class="t" style="left:52.2px;top:60.8px;color:#c4c4c4;">Scripts</div>
<div class="t" style="left:63.8px;top:74.2px;color:#c4c4c4;">BLE</div>
<div class="t" style="left:63.8px;top:87.6px;color:#c4c4c4;">Cube</div>
<div class="t" style="left:63.8px;top:100.9px;color:#c4c4c4;">Navigation</div>
<div class="t" style="left:63.8px;top:114.3px;color:#c4c4c4;">Simulator</div>
<div class="t" style="left:75.4px;top:127.7px;color:#c4c4c4;">Editor</div>
<div class="t" style="left:75.4px;top:141.1px;color:#c4c4c4;">Materials</div>
<div class="t" style="left:75.4px;top:154.5px;color:#c4c4c4;">Models</div>
<div class="t" style="left:75.4px;top:167.9px;color:#c4c4c4;">Resources</div>
<div class="t" style="left:75.4px;top:181.3px;color:#c4c4c4;">Versions</div>
<div class="t" style="left:63.8px;top:194.7px;color:#c4c4c4;">util</div>
<div class="t" style="left:52.2px;top:208.1px;color:#c4c4c4;">Tests</div>
<div class="t" style="left:52.2px;top:221.5px;color:#c4c4c4;">Tutorials</div>
<div class="t" style="left:40.6px;top:234.8px;color:#c4c4c4;">WebGLTemplates</div>
<div class="t" style="left:29.0px;top:248.2px;color:#d2d2d2;font-weight:bold;letter-spacing:-0.1px;opacity:0.93;">Packages</div>
<div class="a" style="left:233.0px;top:34.0px;width:647.0px;height:17.5px;background:#3e3e3e;border-bottom:1px solid #303030"></div>
<div class="t" style="left:236.5px;top:35.8px;color:#c4c4c4;">Assets</div>
<div class="t" style="left:282.0px;top:35.8px;color:#c4c4c4;">toio-sdk</div>
<div class="t" style="left:336.5px;top:35.8px;color:#c4c4c4;">Scripts</div>
<div class="t" style="left:384.5px;top:35.8px;color:#c4c4c4;">Simulator</div>
<div class="t" style="left:444.0px;top:35.8px;color:#d2d2d2;font-weight:bold;letter-spacing:-0.1px;opacity:0.93;">Resources</div>
<div class="t" style="left:261.0px;top:51.9px;color:#c4c4c4;">Cube</div>
<div class="t" style="left:261.0px;top:65.3px;color:#c4c4c4;">CubeIndicator</div>
<div class="t" style="left:261.0px;top:78.7px;color:#c4c4c4;">Line</div>
<div class="t" style="left:261.0px;top:92.2px;color:#c4c4c4;">Mat</div>
<div class="t" style="left:261.0px;top:105.6px;color:#c4c4c4;">Mat</div>
<div class="t" style="left:261.0px;top:119.0px;color:#c4c4c4;">Octave</div>
<div class="t" style="left:261.0px;top:132.4px;color:#c4c4c4;">Stage</div>
<div class="t" style="left:261.0px;top:145.8px;color:#c4c4c4;">StandardID</div>
<div class="t" style="left:261.0px;top:159.3px;color:#c4c4c4;">StandardID</div>
<div class="a" style="left:233.0px;top:248.0px;width:647.0px;height:17.5px;background:#3c3c3c;border-top:1px solid #232323"></div>
<svg class="a" style="left:0;top:0" width="880" height="265"><path d="M6 4.5 h3.5 l1 1 h5 v8 h-9.5 z" fill="#c4c4c4"/><rect x="76" y="3.5" width="8.5" height="9" fill="#c4c4c4"/><path d="M77.5 6 h5.5 M77.5 8.300000000000011 h5.5 M77.5 10.5 h4" stroke="#282828" stroke-width="1"/><path d="M851.5 5 H856 V8.5 M850.5 8.5 H856.5 V11.5 H850.5 Z" fill="none" stroke="#c4c4c4" stroke-width="1"/><g fill="#c4c4c4"><rect x="868.5" y="4.5" width="1.6" height="1.6"/><rect x="868.5" y="8.2" width="1.6" height="1.6"/><rect x="868.5" y="11.9" width="1.6" height="1.6"/></g><path d="M10.7 20 V30 M5.7 25 H15.7" stroke="#c4c4c4" stroke-width="1.6"/><path d="M19.5 23.5 H25.5 L22.5 27 Z" fill="#c4c4c4"/><circle cx="539.5" cy="23.5" r="1.8" fill="none" stroke="#9a9a9a" stroke-width="0.9"/><path d="M540.8 24.899999999999977 L542.5 26.69999999999999" stroke="#9a9a9a" stroke-width="1"/><rect x="793" y="20" width="5" height="5" fill="#c4c4c4"/><circle cx="795.5" cy="27.5" r="2.6" fill="#c4c4c4"/><path d="M798.5 23 l3 5 h-4 z" fill="#c4c4c4"/><path d="M814 25 l4 -4.5 h5 v5 l-4.5 4 z" fill="#c4c4c4"/><circle cx="820.5" cy="22.5" r="0.9" fill="#3c3c3c"/><path d="M842.5 19.5 l1.6 3.7 l3.9 0.3 l-3 2.6 l0.9 3.9 l-3.4 -2.1 l-3.4 2.1 l0.9 -3.9 l-3 -2.6 l3.9 -0.3 z" fill="#8a8a8a"/><path d="M857 25 Q862 20 867 25 Q862 30 857 25 Z M857.5 29 L866.5 21" fill="none" stroke="#c4c4c4" stroke-width="1"/><path d="M224 43 h6 l-3 -3.8 z" fill="#c4c4c4"/><path d="M224 256.5 h6 l-3 3.8 z" fill="#c4c4c4"/><path d="M15.6 38.2 h7 l-3.5 5.8 z" fill="#7a7a7a"/><path d="M27.1 44.7 V36.7 h4 l1 1.3 h5 v1.7 M27.1 44.7 l2 -5 h9.5 l-2 5 z" fill="#c2c2c2" stroke="#c2c2c2" stroke-width="0.5"/><path d="M27.9 43.2 V37.7 h3 l1 1.2 h5 v1.2 h-7.5 z" fill="#383838"/><path d="M28.7 50.8 l6 3.3 l-6 3.3 z" fill="#7a7a7a"/><path d="M38.7 49.6 h4.5 l1 1.5 h5.5 v7.5 h-11 z" fill="#c2c2c2"/><path d="M27.2 65.0 h7 l-3.5 5.8 z" fill="#7a7a7a"/><path d="M38.7 71.5 V63.5 h4 l1 1.3 h5 v1.7 M38.7 71.5 l2 -5 h9.5 l-2 5 z" fill="#c2c2c2" stroke="#c2c2c2" stroke-width="0.5"/><path d="M39.5 70.0 V64.5 h3 l1 1.2 h5 v1.2 h-7.5 z" fill="#383838"/><path d="M40.3 77.6 l6 3.3 l-6 3.3 z" fill="#7a7a7a"/><path d="M50.3 76.4 h4.5 l1 1.5 h5.5 v7.5 h-11 z" fill="#c2c2c2"/><path d="M40.3 91.0 l6 3.3 l-6 3.3 z" fill="#7a7a7a"/><path d="M50.3 89.8 h4.5 l1 1.5 h5.5 v7.5 h-11 z" fill="#c2c2c2"/><path d="M50.3 103.1 h4.5 l1 1.5 h5.5 v7.5 h-11 z" fill="#c2c2c2"/><path d="M38.8 118.5 h7 l-3.5 5.8 z" fill="#7a7a7a"/><path d="M50.3 125.0 V117.0 h4 l1 1.3 h5 v1.7 M50.3 125.0 l2 -5 h9.5 l-2 5 z" fill="#c2c2c2" stroke="#c2c2c2" stroke-width="0.5"/><path d="M51.1 123.5 V118.0 h3 l1 1.2 h5 v1.2 h-7.5 z" fill="#383838"/><path d="M61.9 129.9 h4.5 l1 1.5 h5.5 v7.5 h-11 z" fill="#c2c2c2"/><path d="M61.9 143.3 h4.5 l1 1.5 h5.5 v7.5 h-11 z" fill="#c2c2c2"/><path d="M61.9 156.7 h4.5 l1 1.5 h5.5 v7.5 h-11 z" fill="#c2c2c2"/><path d="M51.9 171.3 l6 3.3 l-6 3.3 z" fill="#7a7a7a"/><path d="M61.9 170.1 h4.5 l1 1.5 h5.5 v7.5 h-11 z" fill="#c2c2c2"/><path d="M61.9 183.5 h4.5 l1 1.5 h5.5 v7.5 h-11 z" fill="#c2c2c2"/><path d="M50.3 196.9 h4.5 l1 1.5 h5.5 v7.5 h-11 z" fill="#c2c2c2"/><path d="M28.7 211.5 l6 3.3 l-6 3.3 z" fill="#7a7a7a"/><path d="M38.7 210.3 h4.5 l1 1.5 h5.5 v7.5 h-11 z" fill="#c2c2c2"/><path d="M28.7 224.9 l6 3.3 l-6 3.3 z" fill="#7a7a7a"/><path d="M38.7 223.7 h4.5 l1 1.5 h5.5 v7.5 h-11 z" fill="#c2c2c2"/><path d="M17.1 238.2 l6 3.3 l-6 3.3 z" fill="#7a7a7a"/><path d="M27.1 237.0 h4.5 l1 1.5 h5.5 v7.5 h-11 z" fill="#c2c2c2"/><path d="M5.5 251.6 l6 3.3 l-6 3.3 z" fill="#7a7a7a"/><path d="M15.5 250.4 h4.5 l1 1.5 h5.5 v7.5 h-11 z" fill="#c2c2c2"/><path d="M273.5 39 l3.8 3.6 l-3.8 3.6" fill="none" stroke="#9a9a9a" stroke-width="1.1"/><path d="M328.0 39 l3.8 3.6 l-3.8 3.6" fill="none" stroke="#9a9a9a" stroke-width="1.1"/><path d="M376.5 39 l3.8 3.6 l-3.8 3.6" fill="none" stroke="#9a9a9a" stroke-width="1.1"/><path d="M434.5 39 l3.8 3.6 l-3.8 3.6" fill="none" stroke="#9a9a9a" stroke-width="1.1"/><path d="M502.5 39 l3.8 3.6 l-3.8 3.6" fill="none" stroke="#9a9a9a" stroke-width="1.1"/><path d="M252.0 53.1 L257.5 55.8 V61.8 L252.0 64.6 L246.5 61.8 V55.8 Z" fill="#62c3f2"/><path d="M247.0 56.1 L252.0 58.6 L257.0 56.1 M252.0 58.6 V64.2" stroke="#2d2d2d" stroke-width="0.9" fill="none"/><path d="M252.0 66.5 L257.5 69.2 V75.2 L252.0 78.0 L246.5 75.2 V69.2 Z" fill="#62c3f2"/><path d="M247.0 69.5 L252.0 72.0 L257.0 69.5 M252.0 72.0 V77.6" stroke="#2d2d2d" stroke-width="0.9" fill="none"/><path d="M252.0 79.9 L257.5 82.6 V88.6 L252.0 91.4 L246.5 88.6 V82.6 Z" fill="#62c3f2"/><path d="M247.0 82.9 L252.0 85.4 L257.0 82.9 M252.0 85.4 V91.0" stroke="#2d2d2d" stroke-width="0.9" fill="none"/><path d="M248.0 94.4 h4.5 l1 1.5 h5.5 v7.5 h-11 z" fill="#c2c2c2"/><path d="M252.0 106.8 L257.5 109.5 V115.5 L252.0 118.3 L246.5 115.5 V109.5 Z" fill="#62c3f2"/><path d="M247.0 109.8 L252.0 112.3 L257.0 109.8 M252.0 112.3 V117.9" stroke="#2d2d2d" stroke-width="0.9" fill="none"/><path d="M248.0 121.2 h4.5 l1 1.5 h5.5 v7.5 h-11 z" fill="#c2c2c2"/><path d="M252.0 133.6 L257.5 136.3 V142.3 L252.0 145.1 L246.5 142.3 V136.3 Z" fill="#62c3f2"/><path d="M247.0 136.6 L252.0 139.1 L257.0 136.6 M252.0 139.1 V144.7" stroke="#2d2d2d" stroke-width="0.9" fill="none"/><path d="M248.0 148.0 h4.5 l1 1.5 h5.5 v7.5 h-11 z" fill="#c2c2c2"/><path d="M252.0 160.5 L257.5 163.2 V169.2 L252.0 172.0 L246.5 169.2 V163.2 Z" fill="#62c3f2"/><path d="M247.0 163.5 L252.0 166.0 L257.0 163.5 M252.0 166.0 V171.6" stroke="#2d2d2d" stroke-width="0.9" fill="none"/><line x1="825" y1="256.5" x2="867" y2="256.5" stroke="#6a6a6a" stroke-width="1"/><circle cx="825.5" cy="256.5" r="4" fill="#9a9a9a"/></svg>
<!--PEND-->
</div>

</body></html>
